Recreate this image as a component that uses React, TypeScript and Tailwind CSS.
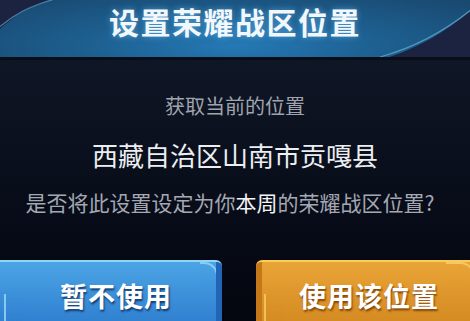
const cjk = { fontFamily: '"Noto Sans CJK SC", "Noto Sans", sans-serif' };

function HeaderArcs() {
  return (
    <svg className="pointer-events-none absolute inset-0" width="470" height="57" viewBox="0 0 470 57">
      <path d="M-10 38 C 10 18, 30 6, 55 -2 L -10 -2 Z" fill="#1b2340" />
      <path d="M-4 30 C 14 14, 30 6, 55 -1" stroke="#4f93b8" strokeWidth="1.2" fill="none" opacity="0.8" />
      <path d="M380 60 C 420 48, 450 30, 480 2 L 480 60 Z" fill="#1b2340" />
      <path d="M380 57 C 420 46, 450 28, 478 4" stroke="#5aa7c9" strokeWidth="1.2" fill="none" opacity="0.8" />
    </svg>
  );
}

export default function App() {
  return (
    <div
      className="w-[470px] h-[321px] overflow-hidden flex flex-col bg-gradient-to-b from-[#121a2b] to-[#04060f]"
      style={cjk}
    >
      <div className="relative h-[57px] shrink-0 bg-[radial-gradient(ellipse_at_50%_80%,#2579b6_0%,#1d5f8f_45%,#19476e_100%)]">
        <HeaderArcs />
        <div className="relative flex h-full items-center justify-center pb-[14px]">
          <span className="text-[30px] font-bold leading-[43px] tracking-[1.5px] text-[#f2f7fb] [text-shadow:0_0_6px_rgba(120,200,255,0.6)]">
            设置荣耀战区位置
          </span>
        </div>
      </div>
      <div className="h-[3px] shrink-0 bg-[#0a0e18]" />

      <div className="flex flex-col items-center">
        <p className="mt-[32px] text-[20px] leading-[28px] text-[#9fa4ae]">获取当前的位置</p>
        <p className="mt-[17px] text-[26px] leading-[36px] text-[#eceef2]">西藏自治区山南市贡嘎县</p>
        <p className="mt-[15px] pr-[10px] text-[21px] leading-[28px] text-[#a3a8b2] whitespace-nowrap">
          是否将此设置设定为你<span className="text-[#f3f4f6]">本周</span>的荣耀战区位置?
        </p>
      </div>

      <div className="mt-[44px] flex gap-[34px]">
        <button className="relative h-[64px] w-[222px] shrink-0 overflow-hidden rounded-tr-[6px] border-t-2 border-[#8fd6f5] bg-gradient-to-b from-[#4ca4e4] to-[#2f7fd0] pt-[6px]">
          <span className="pointer-events-none absolute right-[4px] top-0 h-[30px] w-[18px] rounded-tr-[14px] border-r-2 border-t-2 border-[#9be0ff] opacity-70" />
          <span className="pointer-events-none absolute left-[4px] bottom-[-20px] h-[50px] w-[20px] rounded-bl-[30px] border-l-2 border-[#a5e6ff] opacity-70" />
          <span className="pointer-events-none absolute right-0 top-0 h-full w-[6px] bg-[#2265b6]" />
          <span className="relative block pl-[10px] text-[27px] font-bold leading-[36px] tracking-[1px] text-white [text-shadow:1px_2px_2px_rgba(10,40,90,0.8)]">
            暂不使用
          </span>
        </button>
        <button className="relative h-[64px] w-[230px] shrink-0 overflow-hidden rounded-tl-[6px] border-t-2 border-[#f7cf55] bg-gradient-to-b from-[#e9a437] to-[#d48a20] pt-[6px]">
          <span className="pointer-events-none absolute left-0 top-0 h-full w-[6px] bg-[#c57818]" />
          <span className="pointer-events-none absolute left-[8px] bottom-[-20px] h-[50px] w-[20px] rounded-bl-[30px] border-l-2 border-[#fbd36a] opacity-70" />
          <span className="pointer-events-none absolute right-[10px] top-0 h-[24px] w-[30px] rounded-tr-[16px] border-r-2 border-t-2 border-[#ffe08a] opacity-60" />
          <span className="relative block pr-[4px] text-[27px] font-bold leading-[36px] tracking-[1px] text-white [text-shadow:1px_2px_2px_rgba(110,50,0,0.8)]">
            使用该位置
          </span>
        </button>
      </div>
    </div>
  );
}
